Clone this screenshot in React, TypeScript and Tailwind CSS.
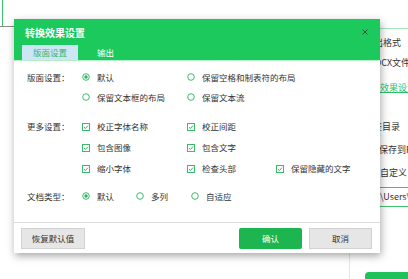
import React from 'react';

const font = { fontFamily: '"Noto Sans CJK SC", "Noto Sans", sans-serif' };

function Radio({ checked }: { checked?: boolean }) {
  return (
    <svg width="8" height="8" viewBox="0 0 8 8" className="shrink-0">
      <circle cx="4" cy="4" r="3.3" fill="white" stroke="#3dbb6c" strokeWidth="1" />
      {checked && <circle cx="4" cy="4" r="1.7" fill="#2fb35e" />}
    </svg>
  );
}

function Check() {
  return (
    <svg width="8" height="8" viewBox="0 0 8 8" className="shrink-0">
      <rect x="0.5" y="0.5" width="7" height="7" fill="white" stroke="#3dbb6c" strokeWidth="1" />
      <path d="M2 4.2 L3.4 5.5 L6 2.6" fill="none" stroke="#2fb35e" strokeWidth="1" />
    </svg>
  );
}

function Opt({ label, type, checked, w }: { label: string; type: 'radio' | 'check'; checked?: boolean; w: string }) {
  return (
    <div className={`flex items-center shrink-0 ${w}`}>
      <div className="w-[15px] shrink-0 flex items-center">{type === 'radio' ? <Radio checked={checked} /> : <Check />}</div>
      <span className="text-[8.5px] text-[#333] whitespace-nowrap">{label}</span>
    </div>
  );
}

function Label({ text }: { text: string }) {
  return <span className="w-[55px] shrink-0 text-[8.5px] text-[#333] whitespace-nowrap">{text}</span>;
}

export default function App() {
  return (
    <div className="relative w-[408px] h-[279px] bg-white overflow-hidden" style={font}>
      {/* page behind the dialog */}
      <div className="absolute left-[2px] top-0 w-[60px] h-[26px] border-l border-[#36c46c]" />
      <div className="absolute left-0 top-[26px] w-[60px] h-px bg-[#8c8c8c]" />
      <div className="absolute left-[300px] right-0 top-[28px] h-px bg-[#a6e6bd]" />
      <div className="absolute left-[349px] top-[250px] bottom-0 w-px bg-[#e6e6e6]" />

      <div className="absolute left-[374px] top-[37px] w-[60px] flex flex-col text-[9px] text-[#333] whitespace-nowrap">
        <span className="leading-[12px]">出格式</span>
        <span className="leading-[12px] mt-[8px] pl-[1px]">DCX文件</span>
        <span className="leading-[12px] mt-[13px] ml-[-3px] text-[#2fbf68] underline">换效果设置</span>
        <span className="leading-[12px] mt-[27px] ml-[-10px]">书签目录</span>
        <span className="leading-[12px] mt-[11px] ml-[5px]">保存到PDF</span>
        <span className="leading-[12px] mt-[11px] ml-[6px]">自定义目录</span>
        <div className="mt-[8px] ml-[4px] h-[20px] border border-[#3ec46e] flex items-center pl-[1px]">
          <span>\Users\Admin</span>
        </div>
      </div>
      <div className="absolute left-[365px] top-[272px] w-[60px] h-[20px] rounded-sm bg-[#1fc25a]" />

      {/* dialog */}
      <div className="absolute left-[14px] top-[19px] w-[366px] h-[234px] bg-white flex flex-col shadow-[1px_3px_8px_rgba(0,0,0,0.35)]">
        <div className="bg-[#1cc95c] h-[41px] flex flex-col">
          <div className="h-[26px] flex items-center justify-between pl-[11px] pr-[12px]">
            <span className="text-[10px] font-bold text-white">转换效果设置</span>
            <svg width="6" height="6" viewBox="0 0 6 6">
              <path d="M0.5 0.5 L5.5 5.5 M5.5 0.5 L0.5 5.5" stroke="#2f4f3a" strokeWidth="1" />
            </svg>
          </div>
          <div className="flex h-[15px] pl-[8px]">
            <div className="w-[56px] bg-[#cde6f5] text-[#36b56a] flex items-center justify-center text-[8.5px]">版面设置</div>
            <div className="ml-[19px] text-white flex items-center text-[8.5px]">输出</div>
          </div>
        </div>
        <div className="h-px bg-[#b4efc8]" />

        <div className="flex-1 flex flex-col pl-[13px] pt-[6px]">
          <div className="flex items-center h-[20px]">
            <Label text="版面设置：" />
            <Opt type="radio" checked label="默认" w="w-[105px]" />
            <Opt type="radio" label="保留空格和制表符的布局" w="w-[89px]" />
          </div>
          <div className="flex items-center h-[20px]">
            <div className="w-[55px] shrink-0" />
            <Opt type="radio" label="保留文本框的布局" w="w-[105px]" />
            <Opt type="radio" label="保留文本流" w="w-[89px]" />
          </div>

          <div className="flex items-center h-[21px] mt-[9px]">
            <Label text="更多设置：" />
            <Opt type="check" label="校正字体名称" w="w-[105px]" />
            <Opt type="check" label="校正间距" w="w-[89px]" />
          </div>
          <div className="flex items-center h-[21px]">
            <div className="w-[55px] shrink-0" />
            <Opt type="check" label="包含图像" w="w-[105px]" />
            <Opt type="check" label="包含文字" w="w-[89px]" />
          </div>
          <div className="flex items-center h-[21px]">
            <div className="w-[55px] shrink-0" />
            <Opt type="check" label="缩小字体" w="w-[105px]" />
            <Opt type="check" label="检查头部" w="w-[89px]" />
            <Opt type="check" label="保留隐藏的文字" w="w-[80px]" />
          </div>

          <div className="flex items-center h-[20px] mt-[7px]">
            <Label text="文档类型：" />
            <Opt type="radio" checked label="默认" w="w-[54px]" />
            <Opt type="radio" label="多列" w="w-[55px]" />
            <Opt type="radio" label="自适应" w="w-[60px]" />
          </div>
        </div>

        <div className="border-t border-[#dcdcdc] h-[31px] flex items-center justify-between pl-[7px] pr-[8px]">
          <button className="w-[64px] h-[21px] bg-[#e6e6e6] border border-[#d2d2d2] text-[8.5px] text-[#333]">恢复默认值</button>
          <div className="flex gap-[7px]">
            <button className="w-[63px] h-[21px] bg-[#1cb550] rounded-[2px] text-[8.5px] text-white">确认</button>
            <button className="w-[63px] h-[21px] bg-[#e6e6e6] border border-[#d2d2d2] text-[8.5px] text-[#333]">取消</button>
          </div>
        </div>
      </div>
    </div>
  );
}
